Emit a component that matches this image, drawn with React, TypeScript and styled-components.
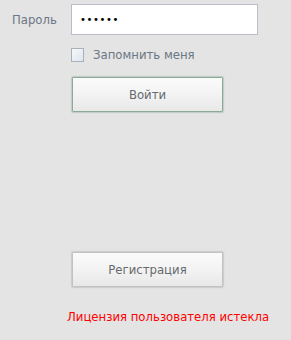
import React from "react";
import styled, { createGlobalStyle } from "styled-components";

const GlobalStyle = createGlobalStyle`
  html, body {
    margin: 0;
    padding: 0;
    background: #e4e4e4;
  }
  body {
    font-family: "DejaVu Sans", Verdana, sans-serif;
    font-size: 11.7px;
  }
`;

const Page = styled.div`
  width: 291px;
  height: 340px;
  box-sizing: border-box;
  padding-top: 4px;
  display: flex;
  flex-direction: column;
`;

const FieldRow = styled.div`
  display: grid;
  grid-template-columns: 71px 187px;
  align-items: center;
`;

const Label = styled.label`
  padding-left: 12px;
  color: #6b7785;
`;

const PasswordInput = styled.input`
  box-sizing: border-box;
  width: 187px;
  height: 31px;
  margin: 0;
  border: 1px solid #b9bdca;
  background: #fff;
  padding: 0 8px;
  font-family: "DejaVu Sans", Verdana, sans-serif;
  font-size: 10px;
  letter-spacing: 0.6px;
  color: #000;
  outline: none;
`;

const Indent = styled.div<{ $top: number }>`
  margin-top: ${(p) => p.$top}px;
  padding-left: 71px;
  display: flex;
  align-items: center;
`;

const CheckBox = styled.span`
  box-sizing: border-box;
  width: 13px;
  height: 14px;
  border: 1px solid #a9b1ba;
  background: linear-gradient(135deg, #f7f9fb 0%, #dce5ee 100%);
`;

const CheckText = styled.span`
  margin-left: 9px;
  color: #6b7785;
`;

const Button = styled.button<{ $accent?: boolean }>`
  box-sizing: border-box;
  width: 151px;
  height: 35px;
  margin: 0 0 0 1px;
  border: 1px solid ${(p) => (p.$accent ? "#8daa98" : "#c2c2c2")};
  border-radius: 1px;
  background: linear-gradient(#fbfbfb 0%, #f3f3f3 50%, #e8e8e8 100%);
  box-shadow: 0 0 1px 1px ${(p) => (p.$accent ? "rgba(120,160,135,0.35)" : "rgba(150,150,150,0.3)")};
  color: #666a6e;
  font-family: "DejaVu Sans", Verdana, sans-serif;
  font-size: 11.7px;
  cursor: pointer;
`;

const ErrorText = styled.div`
  padding-left: 67px;
  margin-top: 23px;
  color: #ff0000;
`;

export default function App() {
  return (
    <>
      <GlobalStyle />
      <Page>
        <FieldRow>
          <Label htmlFor="pwd">Пароль</Label>
          <PasswordInput id="pwd" type="password" defaultValue="123456" readOnly />
        </FieldRow>
        <Indent $top={13}>
          <CheckBox />
          <CheckText>Запомнить меня</CheckText>
        </Indent>
        <Indent $top={15}>
          <Button $accent>Войти</Button>
        </Indent>
        <Indent $top={140}>
          <Button>Регистрация</Button>
        </Indent>
        <ErrorText>Лицензия пользователя истекла</ErrorText>
      </Page>
    </>
  );
}
